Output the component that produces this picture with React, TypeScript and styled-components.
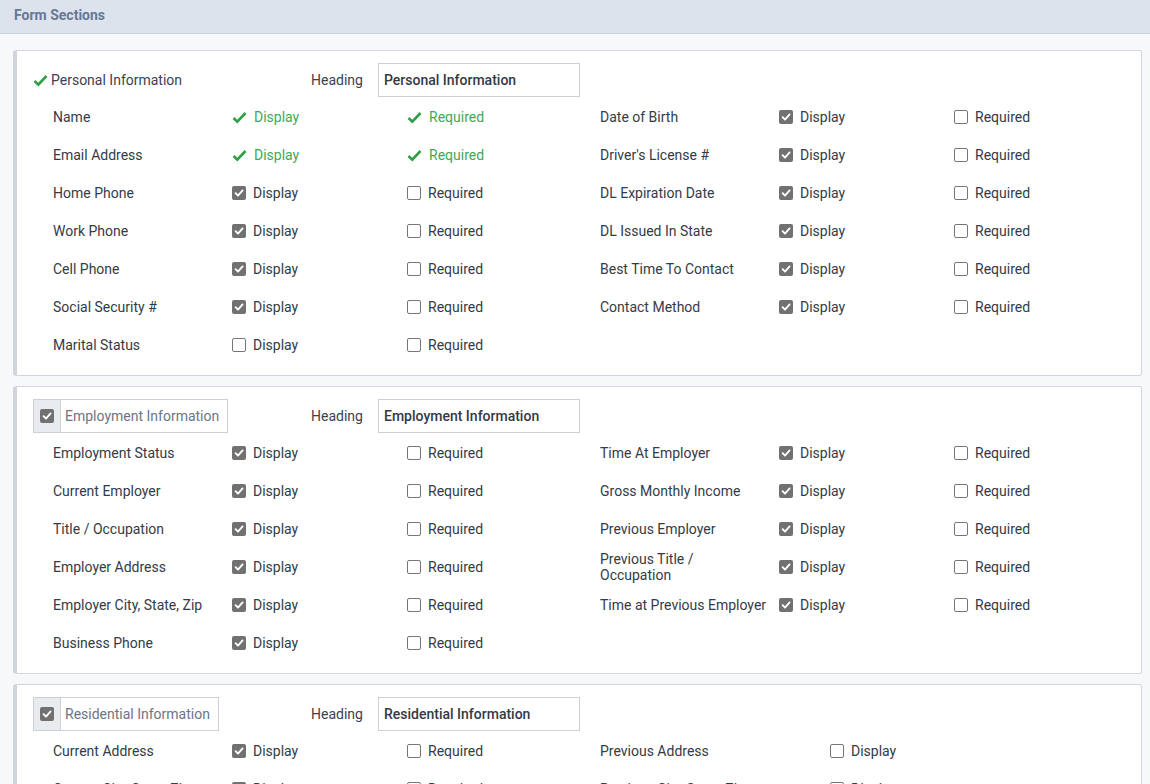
import React from "react";
import styled, { createGlobalStyle } from "styled-components";

type Field = { label: string; display: boolean | "fixed"; required?: boolean | "fixed" };
type Section = {
  title: string;
  locked?: boolean;
  compactRight?: boolean;
  left: Field[];
  right: Field[];
};

const f = (label: string, display: boolean | "fixed" = true, required?: boolean | "fixed"): Field => ({
  label,
  display,
  required: required === undefined ? false : required,
});

const sections: Section[] = [
  {
    title: "Personal Information",
    locked: true,
    left: [
      f("Name", "fixed", "fixed"),
      f("Email Address", "fixed", "fixed"),
      f("Home Phone"),
      f("Work Phone"),
      f("Cell Phone"),
      f("Social Security #"),
      f("Marital Status", false),
    ],
    right: [
      f("Date of Birth"),
      f("Driver's License #"),
      f("DL Expiration Date"),
      f("DL Issued In State"),
      f("Best Time To Contact"),
      f("Contact Method"),
    ],
  },
  {
    title: "Employment Information",
    left: [
      f("Employment Status"),
      f("Current Employer"),
      f("Title / Occupation"),
      f("Employer Address"),
      f("Employer City, State, Zip"),
      f("Business Phone"),
    ],
    right: [
      f("Time At Employer"),
      f("Gross Monthly Income"),
      f("Previous Employer"),
      f("Previous Title / Occupation"),
      f("Time at Previous Employer"),
    ],
  },
  {
    title: "Residential Information",
    compactRight: true,
    left: [f("Current Address"), f("Current City, State, Zip")],
    right: [
      { label: "Previous Address", display: false },
      { label: "Previous City, State, Zip", display: false },
    ],
  },
];

const GlobalStyle = createGlobalStyle`
  body {
    margin: 0;
    background: #f7f8fa;
    font-family: Roboto, "Liberation Sans", sans-serif;
    font-size: 14px;
    color: #343b47;
  }
`;

const TopBar = styled.div`
  height: 34px;
  box-sizing: border-box;
  background: #dde3ec;
  border-bottom: 1px solid #cdd3dc;
  display: flex;
  align-items: center;
  padding: 0 0 4px 14px;
  font-size: 14px;
  font-weight: 700;
  color: #6a7792;
`;

const Content = styled.div`
  padding: 16px 8px 0 13px;
  display: flex;
  flex-direction: column;
  gap: 10px;
`;

const Card = styled.div`
  background: #fff;
  border: 1px solid #d3d7dd;
  border-left: 4px solid #d0d5dc;
  border-radius: 3px;
  padding: 12px 0 11px 16px;
`;

const HeaderRow = styled.div`
  display: flex;
  align-items: center;
  height: 34px;
  margin-bottom: 1px;
`;

const TitleSlot = styled.div`
  width: 278px;
  display: flex;
  align-items: center;
`;

const LockedTitle = styled.div`
  display: flex;
  align-items: center;
  gap: 3px;
  color: #3b4250;
`;

const ToggleGroup = styled.div`
  display: flex;
  height: 34px;
  border: 1px solid #cdd1d6;
  box-sizing: border-box;
`;

const Addon = styled.div`
  width: 26px;
  background: #e9ecef;
  border-right: 1px solid #cdd1d6;
  display: flex;
  align-items: center;
  justify-content: center;
`;

const ToggleText = styled.div`
  display: flex;
  align-items: center;
  padding: 0 8px 0 4px;
  color: #6b7585;
`;

const HeadingLabel = styled.div`
  width: 67px;
  color: #3b4250;
`;

const HeadingInput = styled.div`
  width: 202px;
  height: 34px;
  box-sizing: border-box;
  border: 1px solid #cdd1d6;
  display: flex;
  align-items: center;
  padding-left: 5px;
  font-weight: 500;
  color: #333a44;
`;

const Grid = styled.div<{ $compactRight?: boolean }>`
  display: grid;
  grid-template-columns: ${(p) =>
    p.$compactRight ? "179px 175px 193px 230px 1fr" : "179px 175px 193px 179px 175px 1fr"};
  margin-left: 20px;
`;

const Cell = styled.div`
  height: 38px;
  display: flex;
  align-items: center;
  line-height: 16px;
  padding-right: 12px;
`;

const Option = styled.div<{ $fixed?: boolean }>`
  display: flex;
  align-items: center;
  gap: 7px;
  color: ${(p) => (p.$fixed ? "#42a853" : "#343b47")};
`;

const Box = styled.span<{ $checked: boolean }>`
  width: 14px;
  height: 14px;
  box-sizing: border-box;
  border-radius: 2px;
  display: inline-flex;
  align-items: center;
  justify-content: center;
  background: ${(p) => (p.$checked ? "#717171" : "#fff")};
  border: ${(p) => (p.$checked ? "none" : "1px solid #767676")};
`;

const Tick = ({ color = "#fff", size = 10 }: { color?: string; size?: number }) => (
  <svg width={size} height={size} viewBox="0 0 10 10">
    <path d="M1.6 5.2 L4 7.6 L8.6 2.4" fill="none" stroke={color} strokeWidth="1.9" strokeLinecap="round" strokeLinejoin="round" />
  </svg>
);

const GreenTick = () => (
  <svg width="15" height="13" viewBox="0 0 15 13">
    <path d="M1.5 7 L5.3 10.6 L13.5 2" fill="none" stroke="#2f9e44" strokeWidth="2.6" strokeLinejoin="miter" />
  </svg>
);

const Check = ({ value, text }: { value: boolean | "fixed"; text: string }) =>
  value === "fixed" ? (
    <Option $fixed>
      <GreenTick />
      {text}
    </Option>
  ) : (
    <Option>
      <Box $checked={value}>{value && <Tick />}</Box>
      {text}
    </Option>
  );

const FieldCells = ({ field, blanks }: { field?: Field; blanks: number }) =>
  field ? (
    <>
      <Cell>{field.label}</Cell>
      <Cell>
        <Check value={field.display} text="Display" />
      </Cell>
      {field.required !== undefined && (
        <Cell>
          <Check value={field.required} text="Required" />
        </Cell>
      )}
    </>
  ) : (
    <>
      {Array.from({ length: blanks }).map((_, i) => (
        <Cell key={i} />
      ))}
    </>
  );

function SectionCard({ section }: { section: Section }) {
  const rows = Math.max(section.left.length, section.right.length);
  return (
    <Card>
      <HeaderRow>
        <TitleSlot>
          {section.locked ? (
            <LockedTitle>
              <GreenTick />
              {section.title}
            </LockedTitle>
          ) : (
            <ToggleGroup>
              <Addon>
                <Box $checked>
                  <Tick />
                </Box>
              </Addon>
              <ToggleText>{section.title}</ToggleText>
            </ToggleGroup>
          )}
        </TitleSlot>
        <HeadingLabel>Heading</HeadingLabel>
        <HeadingInput>{section.title}</HeadingInput>
      </HeaderRow>
      <Grid $compactRight={section.compactRight}>
        {Array.from({ length: rows }).map((_, i) => (
          <React.Fragment key={i}>
            <FieldCells field={section.left[i]} blanks={3} />
            <FieldCells field={section.right[i]} blanks={section.compactRight ? 2 : 3} />
          </React.Fragment>
        ))}
      </Grid>
    </Card>
  );
}

export default function App() {
  return (
    <>
      <GlobalStyle />
      <TopBar>Form Sections</TopBar>
      <Content>
        {sections.map((s) => (
          <SectionCard key={s.title} section={s} />
        ))}
      </Content>
    </>
  );
}
